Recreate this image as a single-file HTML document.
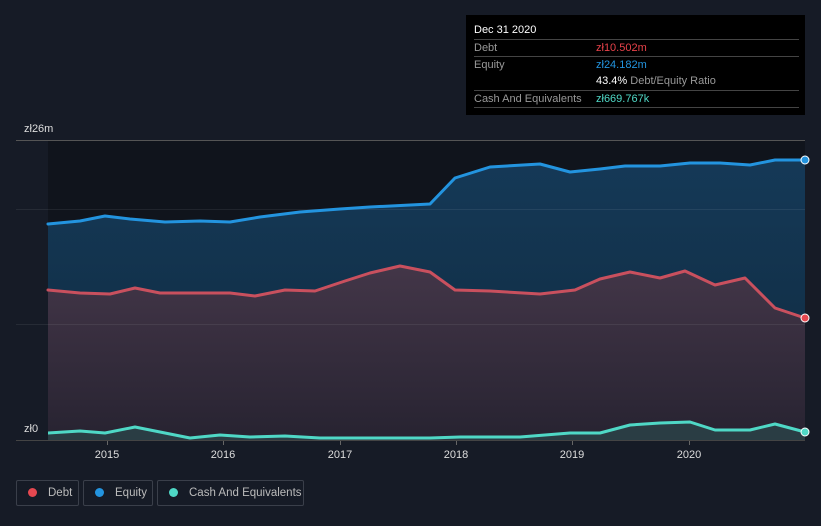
<!DOCTYPE html>
<html><head><meta charset="utf-8"><style>
html,body{margin:0;background:#161b26;width:821px;height:526px;overflow:hidden;font-family:"Liberation Sans",sans-serif;position:relative}
.tt{position:absolute;left:466px;top:15px;width:339px;height:100px;background:#000;color:#fff;font-size:11px}
.row{position:absolute;left:8px;right:6px;border-top:1px solid #444;height:17px;line-height:17px;color:#999;white-space:nowrap}
.row span{position:absolute;left:122px}
.leg{position:absolute;top:480px;height:26px;border:1px solid #3a3f4a;border-radius:2px;color:#bbb;font-size:11.5px;line-height:24px;box-sizing:border-box;white-space:nowrap;overflow:hidden}
.leg i{display:inline-block;width:9px;height:9px;border-radius:50%;margin:0 11px 0 11px;vertical-align:-1px}
</style></head><body>
<svg width="821" height="526" style="position:absolute;left:0;top:0">
<defs>
<linearGradient id="dg" x1="0" y1="0" x2="0" y2="1"><stop offset="0" stop-color="#433648"/><stop offset="1" stop-color="#272331"/></linearGradient>
<linearGradient id="eg" x1="0" y1="0" x2="0" y2="1"><stop offset="0" stop-color="#153957"/><stop offset="1" stop-color="#0f2a3f"/></linearGradient>
</defs>
<rect x="48" y="140" width="757" height="300" fill="#10141c"/>
<line x1="16" y1="140.5" x2="805" y2="140.5" stroke="#555"/>
<polygon fill="url(#eg)" points="48,440 48,224 80,221 105,216 130,219 165,222 200,221 230,222 260,217 300,212 340,209 370,207 430,204 455,178 490,167 540,164 570,172 600,169 625,166 660,166 690,163 720,163 750,165 775,160 805,160 805,440"/>
<polygon fill="url(#dg)" points="48,440 48,290 80,293 110,294 135,288 160,293 230,293 255,296 285,290 315,291 345,281 370,273 400,266 430,272 455,290 490,291 540,294 575,290 600,279 630,272 660,278 685,271 715,285 745,278 775,308 805,318 805,440"/>
<line x1="16" y1="209.5" x2="805" y2="209.5" stroke="#ffffff" stroke-opacity="0.07"/>
<line x1="16" y1="324.5" x2="805" y2="324.5" stroke="#ffffff" stroke-opacity="0.07"/>
<polygon fill="#2a3d44" points="48,440 48,433 80,431 105,433 135,427 160,432 190,438 220,435 250,437 285,436 320,438 430,438 460,437 520,437 570,433 600,433 630,425 660,423 690,422 715,430 750,430 775,424 805,432 805,440"/>
<g fill="none" stroke-width="3" stroke-linejoin="round" stroke-linecap="round">
<polyline stroke="#2394df" points="48,224 80,221 105,216 130,219 165,222 200,221 230,222 260,217 300,212 340,209 370,207 430,204 455,178 490,167 540,164 570,172 600,169 625,166 660,166 690,163 720,163 750,165 775,160 805,160"/>
<polyline stroke="#c9505e" points="48,290 80,293 110,294 135,288 160,293 230,293 255,296 285,290 315,291 345,281 370,273 400,266 430,272 455,290 490,291 540,294 575,290 600,279 630,272 660,278 685,271 715,285 745,278 775,308 805,318"/>
<polyline stroke="#4fd8c6" points="48,433 80,431 105,433 135,427 160,432 190,438 220,435 250,437 285,436 320,438 430,438 460,437 520,437 570,433 600,433 630,425 660,423 690,422 715,430 750,430 775,424 805,432"/>
</g>
<line x1="16" y1="440.5" x2="805" y2="440.5" stroke="#444"/>
<rect x="16" y="420" width="32" height="20" fill="#161b26"/>
<circle cx="805" cy="160" r="4" fill="#2394df" stroke="#fff" stroke-width="1"/>
<circle cx="805" cy="318" r="4" fill="#e64850" stroke="#fff" stroke-width="1"/>
<circle cx="805" cy="432" r="4" fill="#4fd8c6" stroke="#fff" stroke-width="1"/>
<g stroke="#666"><line x1="107.5" y1="441" x2="107.5" y2="445"/><line x1="223.5" y1="441" x2="223.5" y2="445"/><line x1="340.5" y1="441" x2="340.5" y2="445"/><line x1="456.5" y1="441" x2="456.5" y2="445"/><line x1="572.5" y1="441" x2="572.5" y2="445"/><line x1="689.5" y1="441" x2="689.5" y2="445"/></g>
<g fill="#ddd" font-size="11" text-anchor="middle"><text x="107" y="458">2015</text><text x="223" y="458">2016</text><text x="340" y="458">2017</text><text x="456" y="458">2018</text><text x="572" y="458">2019</text><text x="689" y="458">2020</text></g>
<text x="24" y="132" fill="#ddd" font-size="11">zł26m</text>
<text x="24" y="432" fill="#ddd" font-size="11">zł0</text>
</svg>
<div class="tt">
<div style="position:absolute;left:8px;top:9px;font-size:11px">Dec 31 2020</div>
<div class="row" style="top:24px">Debt<span style="color:#e8424a">zł10.502m</span></div>
<div class="row" style="top:41px">Equity<span style="color:#2394df">zł24.182m</span></div>
<div class="row" style="top:58px;border-top:none"><span style="color:#999"><b style="color:#fff;font-weight:normal">43.4%</b> Debt/Equity Ratio</span></div>
<div class="row" style="top:75px">Cash And Equivalents<span style="color:#4fd8c6">zł669.767k</span></div>
<div class="row" style="top:92px;height:0"></div>
</div>
<div class="leg" style="left:16px;width:63px"><i style="background:#e64850"></i>Debt</div>
<div class="leg" style="left:83px;width:70px"><i style="background:#2394df"></i>Equity</div>
<div class="leg" style="left:157px;width:147px"><i style="background:#4fd8c6"></i>Cash And Equivalents</div>
</body></html>
